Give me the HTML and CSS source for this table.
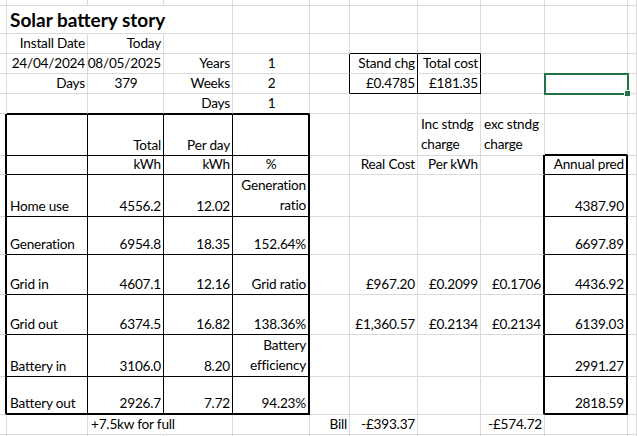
FILE: index.html
```html
<!DOCTYPE html>
<html lang="en">
<head>
<meta charset="utf-8">
<title>Solar battery story</title>
<link rel="stylesheet" href="styles.css">
</head>
<body>
<div class="sheet">
  <div class="row h6">
    <div class="c"></div><div class="c"></div><div class="c"></div><div class="c"></div><div class="c"></div><div class="c"></div><div class="c"></div><div class="c"></div><div class="c"></div><div class="c"></div><div class="c"></div>
  </div>
  <div class="row h28">
    <div class="c"></div>
    <div class="c nR title">Solar battery story</div>
    <div class="c nR"></div>
    <div class="c"></div><div class="c"></div><div class="c"></div><div class="c"></div><div class="c"></div><div class="c"></div><div class="c"></div><div class="c"></div>
  </div>
  <div class="row h20">
    <div class="c"></div>
    <div class="c r">Install Date</div>
    <div class="c r">Today</div>
    <div class="c"></div><div class="c"></div><div class="c"></div>
    <div class="c bB"></div>
    <div class="c bB"></div>
    <div class="c"></div><div class="c"></div><div class="c"></div>
  </div>
  <div class="row h20">
    <div class="c"></div>
    <div class="c r">24/04/2024</div>
    <div class="c r">08/05/2025</div>
    <div class="c r">Years</div>
    <div class="c m">1</div>
    <div class="c bR"></div>
    <div class="c r bR">Stand chg</div>
    <div class="c r bR">Total cost</div>
    <div class="c"></div><div class="c"></div><div class="c"></div>
  </div>
  <div class="row h20">
    <div class="c"></div>
    <div class="c r">Days</div>
    <div class="c m">379</div>
    <div class="c r">Weeks</div>
    <div class="c m">2</div>
    <div class="c bR"></div>
    <div class="c r bR bB">£0.4785</div>
    <div class="c r bR bB">£181.35</div>
    <div class="c"></div>
    <div class="c sel"></div>
    <div class="c"></div>
  </div>
  <div class="row h20">
    <div class="c"></div>
    <div class="c bB"></div>
    <div class="c bB"></div>
    <div class="c r bB">Days</div>
    <div class="c m bB">1</div>
    <div class="c"></div><div class="c"></div><div class="c"></div><div class="c"></div><div class="c"></div><div class="c"></div>
  </div>
  <div class="row h41">
    <div class="c tR"></div>
    <div class="c bR bT bB"></div>
    <div class="c r bR bT bB">Total</div>
    <div class="c r bR bT bB">Per day</div>
    <div class="c tR bT bB"></div>
    <div class="c"></div>
    <div class="c"></div>
    <div class="c"><span class="w">Inc stndg<br>charge</span></div>
    <div class="c"><span class="w">exc stndg<br>charge</span></div>
    <div class="c tB"></div>
    <div class="c"></div>
  </div>
  <div class="row h20">
    <div class="c tR"></div>
    <div class="c bR bB"></div>
    <div class="c r bR bB">kWh</div>
    <div class="c r bR bB">kWh</div>
    <div class="c m tR bB">%</div>
    <div class="c"></div>
    <div class="c r">Real Cost</div>
    <div class="c r">Per kWh</div>
    <div class="c tR"></div>
    <div class="c r tR bB">Annual pred</div>
    <div class="c"></div>
  </div>
  <div class="row h40">
    <div class="c tR"></div>
    <div class="c bR bB">Home use</div>
    <div class="c r bR bB">4556.2</div>
    <div class="c r bR bB">12.02</div>
    <div class="c r tR bB"><span class="w wr">Generation<br>ratio</span></div>
    <div class="c"></div><div class="c"></div><div class="c"></div>
    <div class="c tR"></div>
    <div class="c r tR bB">4387.90</div>
    <div class="c"></div>
  </div>
  <div class="row h40">
    <div class="c tR"></div>
    <div class="c bR bB">Generation</div>
    <div class="c r bR bB">6954.8</div>
    <div class="c r bR bB">18.35</div>
    <div class="c r tR bB">152.64%</div>
    <div class="c"></div><div class="c"></div><div class="c"></div>
    <div class="c tR"></div>
    <div class="c r tR bB">6697.89</div>
    <div class="c"></div>
  </div>
  <div class="row h40">
    <div class="c tR"></div>
    <div class="c bR bB">Grid in</div>
    <div class="c r bR bB">4607.1</div>
    <div class="c r bR bB">12.16</div>
    <div class="c r tR bB">Grid ratio</div>
    <div class="c"></div>
    <div class="c r">£967.20</div>
    <div class="c r">£0.2099</div>
    <div class="c r tR">£0.1706</div>
    <div class="c r tR bB">4436.92</div>
    <div class="c"></div>
  </div>
  <div class="row h40">
    <div class="c tR"></div>
    <div class="c bR bB">Grid out</div>
    <div class="c r bR bB">6374.5</div>
    <div class="c r bR bB">16.82</div>
    <div class="c r tR bB">138.36%</div>
    <div class="c"></div>
    <div class="c r">£1,360.57</div>
    <div class="c r">£0.2134</div>
    <div class="c r tR">£0.2134</div>
    <div class="c r tR bB">6139.03</div>
    <div class="c"></div>
  </div>
  <div class="row h40">
    <div class="c tR"></div>
    <div class="c bR bB">Battery in</div>
    <div class="c r bR bB">3106.0</div>
    <div class="c r bR bB">8.20</div>
    <div class="c r tR bB"><span class="w wr">Battery<br>efficiency</span></div>
    <div class="c"></div><div class="c"></div><div class="c"></div>
    <div class="c tR"></div>
    <div class="c r tR bB">2991.27</div>
    <div class="c"></div>
  </div>
  <div class="row h40">
    <div class="c tR"></div>
    <div class="c bR tB">Battery out</div>
    <div class="c r bR tB">2926.7</div>
    <div class="c r bR tB">7.72</div>
    <div class="c r tR tB">94.23%</div>
    <div class="c"></div><div class="c"></div><div class="c"></div>
    <div class="c tR"></div>
    <div class="c r tR tB">2818.59</div>
    <div class="c"></div>
  </div>
  <div class="row h20">
    <div class="c"></div>
    <div class="c"></div>
    <div class="c nR">+7.5kw for full</div>
    <div class="c"></div>
    <div class="c"></div>
    <div class="c r">Bill</div>
    <div class="c r">-£393.37</div>
    <div class="c"></div>
    <div class="c r">-£574.72</div>
    <div class="c"></div>
    <div class="c"></div>
  </div>
  <div class="row hfill">
    <div class="c"></div><div class="c"></div><div class="c"></div><div class="c"></div><div class="c"></div><div class="c"></div><div class="c"></div><div class="c"></div><div class="c"></div><div class="c"></div><div class="c"></div>
  </div>
</div>
</body>
</html>
```
FILE: styles.css
```css
html, body {
  margin: 0;
  background: #fff;
}
body {
  font-family: Lato, "Open Sans", "Liberation Sans", sans-serif;
  font-size: 13.6px;
  letter-spacing: -0.2px;
  color: #000;
}
.sheet {
  display: flex;
  flex-direction: column;
  width: 637px;
  height: 436px;
  overflow: hidden;
}
.row {
  display: grid;
  grid-template-columns: 7px 81px 76px 69px 77px 40px 68px 63px 64px 83px 1fr;
  flex: none;
}
.h6 { height: 6px; }
.h20 { height: 20px; }
.h28 { height: 28px; }
.h40 { height: 40px; }
.h41 { height: 41px; }
.hfill { flex: 1 1 auto; }

.c {
  box-sizing: border-box;
  min-width: 0;
  display: flex;
  align-items: flex-end;
  justify-content: flex-start;
  padding: 0 2px 1px 3px;
  line-height: 18px;
  white-space: nowrap;
  border-right: 1px solid #dadada;
  border-bottom: 1px solid #dadada;
}
.c.r { justify-content: flex-end; }
.c.m { justify-content: center; }
.c.bR { border-right-color: #000; }
.c.tR { border-right: 2px solid #000; }
.c.bB { border-bottom-color: #000; }
.c.tB { border-bottom: 2px solid #000; }
.c.bT { border-top: 1px solid #000; }
.c.nR { border-right-color: transparent; }

.title {
  font-weight: bold;
  font-size: 19px;
  letter-spacing: 0;
  line-height: 26px;
  padding-bottom: 0;
}
.w {
  display: block;
  line-height: 20px;
}
.wr { text-align: right; }

.sel {
  position: relative;
  z-index: 2;
  outline: 2px solid #217346;
  outline-offset: -1px;
}
.sel::after {
  content: "";
  position: absolute;
  right: -4px;
  bottom: -4px;
  width: 5px;
  height: 5px;
  background: #217346;
  border: 1px solid #fff;
}
```
